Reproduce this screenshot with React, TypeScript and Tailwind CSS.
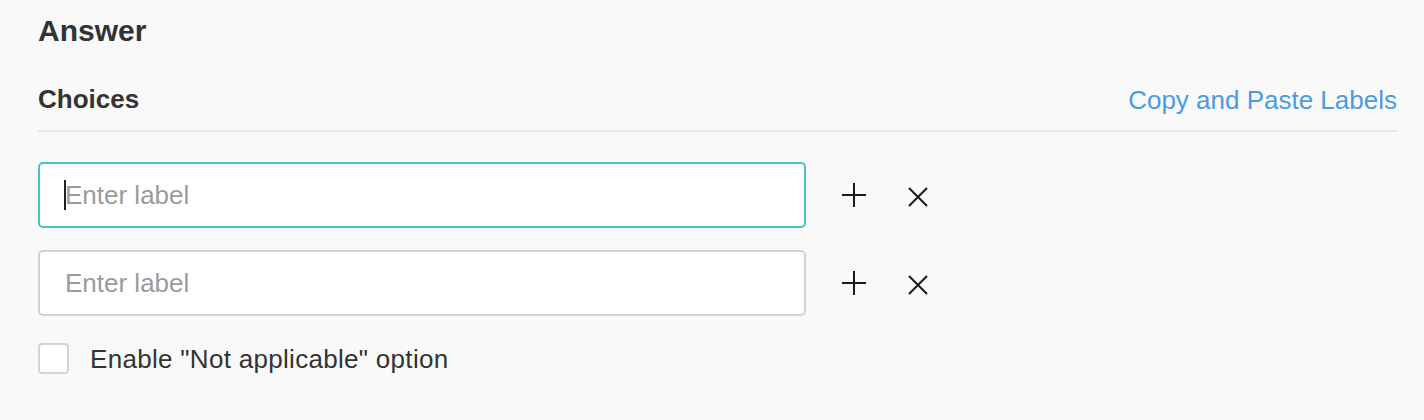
import React from "react";

const font = { fontFamily: '"Liberation Sans", Arial, sans-serif' };

function PlusIcon() {
  return (
    <svg width="24" height="24" viewBox="0 0 24 24" className="shrink-0">
      <path d="M12 0v24M0 12h24" stroke="#1a1a1a" strokeWidth="2" fill="none" />
    </svg>
  );
}

function CrossIcon() {
  return (
    <svg width="20" height="20" viewBox="0 0 20 20" className="shrink-0">
      <path d="M1 1l18 18M19 1L1 19" stroke="#1a1a1a" strokeWidth="2" fill="none" />
    </svg>
  );
}

function ChoiceRow({ focused }: { focused?: boolean }) {
  return (
    <div className="flex items-center">
      <div className="relative w-[768px]">
        <input
          placeholder="Enter label"
          className={`h-[66px] w-full rounded-[5px] border-2 bg-white pl-[25px] text-[26px] text-[#333] outline-none placeholder:text-[#9b9b9b] ${
            focused ? "border-[#43c5c1]" : "border-[#d2d2d2]"
          }`}
          style={font}
        />
        {focused && (
          <span className="absolute left-[26px] top-[18px] h-[30px] w-[2px] bg-[#222]" />
        )}
      </div>
      <button className="ml-[36px] flex h-[30px] w-[24px] items-center justify-center">
        <PlusIcon />
      </button>
      <button className="ml-[42px] mt-[3px] flex h-[30px] w-[20px] items-center justify-center">
        <CrossIcon />
      </button>
    </div>
  );
}

export default function App() {
  return (
    <div className="h-[420px] w-full bg-[#f9f9f9] pl-[38px] pr-[27px] pt-[13px] text-[#333]" style={font}>
      <h1 className="text-[30px] font-bold leading-[36px] text-[#333]">Answer</h1>

      <div className="mt-[35px] flex items-end justify-between border-b-2 border-[#e6e6e6] pb-[16px]">
        <h2 className="text-[26px] font-bold leading-[30px]">Choices</h2>
        <button className="mb-[-1px] text-[26px] leading-[30px] text-[#4a9be0]">
          Copy and Paste Labels
        </button>
      </div>

      <div className="mt-[30px] flex flex-col gap-[22px]">
        <ChoiceRow focused />
        <ChoiceRow />
      </div>

      <label className="mt-[27px] flex items-center gap-[21px]">
        <span className="h-[31px] w-[31px] rounded-[4px] border-2 border-[#d4d4d4] bg-white" />
        <span className="text-[26px] leading-[30px] tracking-[0.3px] text-[#333]">
          Enable "Not applicable" option
        </span>
      </label>
    </div>
  );
}
